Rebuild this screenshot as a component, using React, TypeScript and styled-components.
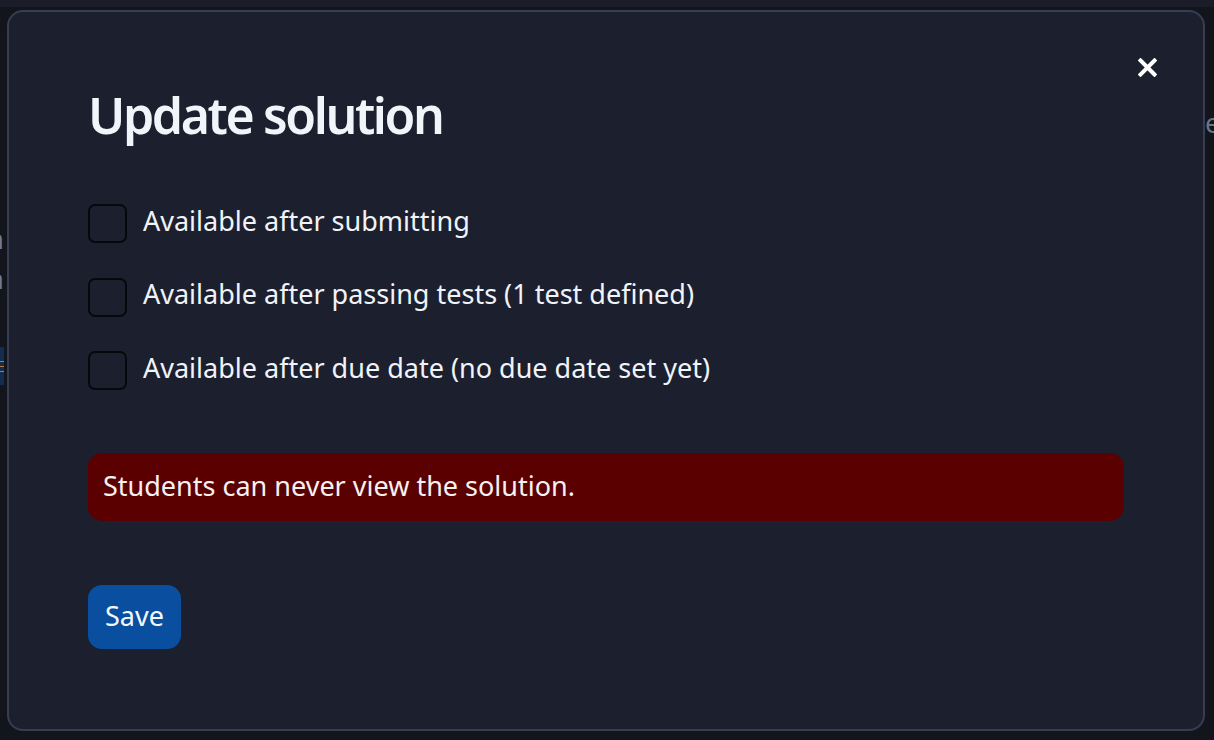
import React, { useState } from 'react';
import styled, { createGlobalStyle } from 'styled-components';

const GlobalStyle = createGlobalStyle`
  html, body {
    margin: 0;
    padding: 0;
    height: 100%;
    background: #12151c;
    font-family: 'Noto Sans', 'Open Sans', sans-serif;
    overflow: hidden;
  }
  #root {
    height: 100%;
  }
`;

const Page = styled.div`
  height: 100%;
  display: flex;
  flex-direction: column;
  background: #12151c;
`;

const TopStrip = styled.div`
  height: 7px;
  background: #1a1d28;
`;

const Underlay = styled.div`
  flex: 1;
  display: flex;
  justify-content: space-between;
`;

const LeftEdge = styled.div`
  width: 4px;
  overflow: hidden;
  display: flex;
  flex-direction: column;
  padding-top: 212px;
`;

const EdgeLine = styled.div`
  display: flex;
  justify-content: flex-end;
  white-space: nowrap;
  font-size: 27px;
  line-height: 40px;
  color: #6f7a8e;
`;

const SideBadge = styled.div`
  margin-top: 48px;
  width: 6px;
  height: 38px;
  background: #142c50;
  display: flex;
  flex-direction: column;
  justify-content: center;
  gap: 4px;
`;

const BadgeDash = styled.span`
  display: block;
  height: 1px;
  width: 5px;
  background: #b87a3a;
`;

const RightEdge = styled.div`
  width: 9px;
  overflow: hidden;
  padding-top: 96px;
`;

const RightLine = styled.div`
  font-size: 27px;
  line-height: 40px;
  color: #6f7580;
  white-space: nowrap;
`;

/* modal overlays the page */
const Modal = styled.div`
  position: fixed;
  top: 10px;
  left: 7px;
  width: 1198px;
  height: 721px;
  box-sizing: border-box;
  background: #1c202e;
  border: 2px solid #383d51;
  border-radius: 16px;
  padding: 72px 79px 0 79px;
  display: flex;
  flex-direction: column;
  align-items: flex-start;
  color: #eef2f8;
`;

const CloseButton = styled.button`
  position: absolute;
  top: 44px;
  right: 44px;
  width: 23px;
  height: 23px;
  padding: 0;
  border: none;
  background: transparent;
  display: flex;
  align-items: center;
  justify-content: center;
  cursor: pointer;
`;

const Title = styled.h2`
  margin: 0 0 58px 0;
  font-size: 50px;
  line-height: 62px;
  font-weight: 600;
  letter-spacing: -2.4px;
  color: #f1f5fa;
`;

const OptionList = styled.div`
  display: flex;
  flex-direction: column;
  gap: 34.5px;
`;

const OptionRow = styled.label`
  display: flex;
  align-items: center;
  gap: 16px;
  height: 39px;
  cursor: pointer;
`;

const Checkbox = styled.span<{ $checked: boolean }>`
  width: 39px;
  height: 39px;
  box-sizing: border-box;
  border: 2px solid #07080c;
  border-radius: 7px;
  background: ${(p) => (p.$checked ? '#0b4f9e' : 'transparent')};
  flex-shrink: 0;
`;

const OptionText = styled.span`
  font-size: 27px;
  line-height: 30px;
  padding-bottom: 6px;
  color: #f0f3f8;
`;

const Alert = styled.div`
  margin-top: 63px;
  align-self: stretch;
  box-sizing: border-box;
  height: 68px;
  padding: 0 15px 3px;
  display: flex;
  align-items: center;
  background: #5b0000;
  border-radius: 14px;
  font-size: 27px;
  color: #f6f0f0;
`;

const SaveButton = styled.button`
  margin-top: 64px;
  height: 64px;
  padding: 0 17px 4px;
  border: none;
  border-radius: 14px;
  background: #0a4f9f;
  color: #f4f7fb;
  font-family: inherit;
  font-size: 27px;
  cursor: pointer;
`;

const options = [
  'Available after submitting',
  'Available after passing tests (1 test defined)',
  'Available after due date (no due date set yet)',
];

export default function App() {
  const [checked, setChecked] = useState<boolean[]>([false, false, false]);

  return (
    <Page>
      <GlobalStyle />
      <TopStrip />
      <Underlay>
        <LeftEdge>
          <EdgeLine>Solution</EdgeLine>
          <EdgeLine>Visibility a</EdgeLine>
          <SideBadge>
            <BadgeDash />
            <BadgeDash />
            <BadgeDash />
          </SideBadge>
        </LeftEdge>
        <RightEdge>
          <RightLine>e</RightLine>
        </RightEdge>
      </Underlay>

      <Modal role="dialog">
        <CloseButton aria-label="Close">
          <svg width="19" height="19" viewBox="0 0 19 19">
            <path d="M2.5 2.5 L16.5 16.5 M16.5 2.5 L2.5 16.5" stroke="#ffffff" strokeWidth="4" strokeLinecap="square" />
          </svg>
        </CloseButton>
        <Title>Update solution</Title>
        <OptionList>
          {options.map((text, i) => (
            <OptionRow
              key={text}
              onClick={() => setChecked((c) => c.map((v, j) => (j === i ? !v : v)))}
            >
              <Checkbox $checked={checked[i]} />
              <OptionText>{text}</OptionText>
            </OptionRow>
          ))}
        </OptionList>
        <Alert>Students can never view the solution.</Alert>
        <SaveButton>Save</SaveButton>
      </Modal>
    </Page>
  );
}
